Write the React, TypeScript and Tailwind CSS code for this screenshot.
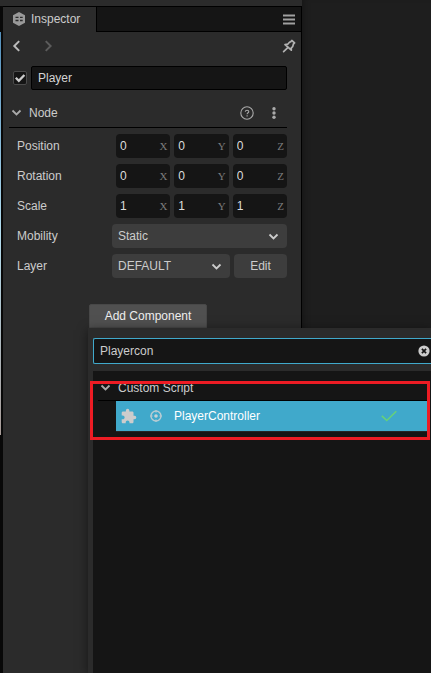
import { useState } from "react";

type Axis = "X" | "Y" | "Z";

const axes: Axis[] = ["X", "Y", "Z"];

const vectors: { label: string; value: string }[] = [
  { label: "Position", value: "0" },
  { label: "Rotation", value: "0" },
  { label: "Scale", value: "1" },
];

function Chevron({ className, d = "M1.5 3.5 5.5 7.5 9.5 3.5" }: { className: string; d?: string }) {
  return (
    <svg viewBox="0 0 11 11" className={className} fill="none" stroke="currentColor" strokeWidth="1.8" aria-hidden="true">
      <path d={d} />
    </svg>
  );
}

function VectorRow({ label, value }: { label: string; value: string }) {
  return (
    <div className="flex h-6 items-center" role="group" aria-label={label}>
      <span className="w-[99px] shrink-0">{label}</span>
      <div className="grid min-w-0 flex-1 grid-cols-3 gap-1">
        {axes.map((axis) => (
          <label key={axis} className="flex h-6 min-w-0 items-center rounded-sm bg-[#151515] pr-[3px] pl-1">
            <input
              type="text"
              defaultValue={value}
              aria-label={`${label} ${axis}`}
              className="w-0 min-w-0 flex-1 bg-transparent text-[#dcdcdc] outline-none"
            />
            <span className="font-['Liberation_Serif',serif] text-[11px] text-[#7c7c7c]">{axis}</span>
          </label>
        ))}
      </div>
    </div>
  );
}

function Select({ id, value, className }: { id: string; value: string; className: string }) {
  return (
    <div className={`grid items-center ${className}`}>
      <select
        id={id}
        className="col-start-1 row-start-1 h-6 w-full appearance-none rounded-sm bg-[#3d3d3d] pl-1.5 text-[#cccccc] outline-none"
      >
        <option>{value}</option>
      </select>
      <Chevron className="pointer-events-none col-start-1 row-start-1 mr-2 size-[11px] justify-self-end text-[#cccccc]" />
    </div>
  );
}

function TabBar() {
  return (
    <div className="flex h-[26px] border-y border-black bg-[#151515]" role="tablist">
      <button
        role="tab"
        aria-selected="true"
        className="-mb-px flex w-[94px] items-center gap-1.5 border-r border-black bg-[#2b2b2b] pb-0.5 pl-2.5"
      >
        <svg viewBox="0 0 12 14" className="h-3.5 w-3 shrink-0" aria-hidden="true">
          <path d="M6 0 12 3.2v7.6L6 14 0 10.8V3.2z" fill="#999999" />
          <path d="M2.5 5.4h3M7 5.4h2.7M2.5 8.5h3M7 8.5h2.7" stroke="#2b2b2b" strokeWidth="1.4" />
        </svg>
        Inspector
      </button>
      <button aria-label="Panel menu" className="mr-1.5 ml-auto">
        <svg viewBox="0 0 12 11" className="h-[11px] w-3" stroke="#a0a0a0" strokeWidth="2.2" aria-hidden="true">
          <path d="M0 1.5h12M0 5.5h12M0 9.5h12" />
        </svg>
      </button>
    </div>
  );
}

function Inspector() {
  return (
    <section className="flex min-w-0 flex-1 flex-col border-r border-black bg-[#2b2b2b]">
      <TabBar />
      <div className="flex h-[34px] items-center pr-[5px] pb-1.5 pl-2">
        <button aria-label="Back" className="text-[#bbbbbb]">
          <Chevron className="size-3" d="M7.500 1 3 5.500 7.500 10" />
        </button>
        <button aria-label="Forward" className="ml-5 text-[#5c5c5c]">
          <Chevron className="size-3" d="M2.500 1 7 5.500 2.500 10" />
        </button>
        <button aria-label="Lock" className="ml-auto">
          <svg viewBox="0 0 14 14" className="size-3.5" fill="none" stroke="#b2b2b2" strokeWidth="1.7" strokeLinejoin="round" strokeLinecap="round" aria-hidden="true">
            <path d="M9.800 1.500 12.600 3.900 11.400 5 10.700 7.600 9.300 8.800 9.300 11.200 3 5.500 5.700 5.200 7.700 3 8.600 2.800zM5.800 8.600 1.600 12.600" />
          </svg>
        </button>
      </div>

      <div className="flex items-center gap-1 pr-3.5 pl-2.5">
        <span className="grid shrink-0 place-items-center">
          <input
            type="checkbox"
            defaultChecked
            aria-label="Node active"
            className="peer col-start-1 row-start-1 size-3.5 appearance-none rounded-xs border border-[#4a4a4a] bg-[#151515]"
          />
          <svg viewBox="0 0 12 12" className="pointer-events-none invisible col-start-1 row-start-1 size-3 peer-checked:visible" fill="none" stroke="#cccccc" strokeWidth="2.300" aria-hidden="true">
            <path d="M1.800 5.800 4.800 8.800 10.400 3" />
          </svg>
        </span>
        <input
          type="text"
          defaultValue="Player"
          aria-label="Node name"
          className="h-6 min-w-0 flex-1 rounded-xs border border-black bg-[#151515] px-1.5 text-[#d4d4d4] outline-none"
        />
      </div>

      <div className="mt-2 mr-3.5 ml-1.5 flex h-[30px] items-center border-b border-black pr-[11px] pl-0.5">
        <button className="flex items-center gap-[7px] font-medium" aria-expanded="true">
          <Chevron className="size-[11px] text-[#aaaaaa]" />
          Node
        </button>
        <button aria-label="Help" className="ml-auto">
          <svg viewBox="0 0 14 14" className="size-3.5" fill="none" stroke="#aaaaaa" aria-hidden="true">
            <circle cx="7" cy="7" r="6.200" strokeWidth="1.100" />
            <path d="M5.300 5.700C5.300 3.700 8.800 3.800 8.800 5.700 8.800 6.800 7.100 6.800 7.100 8.200M7.100 9.300v1.200" strokeWidth="1.100" />
          </svg>
        </button>
        <button aria-label="More options" className="ml-[18px]">
          <svg viewBox="0 0 4 12" className="h-3 w-1" fill="#aaaaaa" aria-hidden="true">
            <circle cx="2" cy="1.700" r="1.700" />
            <circle cx="2" cy="6" r="1.700" />
            <circle cx="2" cy="10.300" r="1.700" />
          </svg>
        </button>
      </div>

      <div className="flex flex-col gap-1.5 pt-1.5 pr-3.5 pl-3.5">
        {vectors.map((row) => (
          <VectorRow key={row.label} {...row} />
        ))}
        <div className="flex h-6 items-center">
          <label htmlFor="mobility" className="w-[95px] shrink-0">Mobility</label>
          <Select id="mobility" value="Static" className="min-w-0 flex-1" />
        </div>
        <div className="flex h-6 items-center">
          <label htmlFor="layer" className="w-[95px] shrink-0">Layer</label>
          <Select id="layer" value="DEFAULT" className="min-w-0 flex-1" />
          <button className="ml-1 h-6 w-[53px] rounded-sm bg-[#3d3d3d]">Edit</button>
        </div>
      </div>

      <div className="mt-[26px] flex justify-center pr-2">
        <button className="h-6 w-[118px] rounded-t-xs border border-[#484848] bg-[#505050] font-medium text-[#eeeeee]">
          Add Component
        </button>
      </div>
    </section>
  );
}

function ComponentMenu() {
  const [query, setQuery] = useState("Playercon");
  return (
    <div className="absolute top-[328px] right-0 bottom-0 left-[88px] flex flex-col bg-[#2b2b2b] pt-2.5 pl-[5px] shadow-[0_2px_10px_rgba(0,0,0,0.5)]">
      <div className="flex h-[26px] items-center rounded-l-xs border border-r-0 border-[#40a9cb] bg-[#151515] pr-px pl-1.5">
        <input
          type="text"
          value={query}
          onChange={(event) => setQuery(event.target.value)}
          aria-label="Search components"
          className="min-w-0 flex-1 bg-transparent text-[#cccccc] outline-none"
        />
        <button aria-label="Clear search" onClick={() => setQuery("")}>
          <svg viewBox="0 0 12 12" className="size-3" aria-hidden="true">
            <circle cx="6" cy="6" r="5.600" fill="#cccccc" />
            <path d="M3.900 3.900 8.100 8.100M8.100 3.900 3.900 8.100" stroke="#151515" strokeWidth="1.700" />
          </svg>
        </button>
      </div>

      <div className="mt-[7px] flex-1 bg-[#151515] pt-1 pr-1 pl-[5px]">
        <button aria-expanded="true" className="flex h-[26px] w-full items-center gap-[7px] border-b border-black pl-0.5 text-[#cccccc]">
          <Chevron className="size-[11px] text-[#aaaaaa]" />
          Custom Script
        </button>
        <button className="ml-[18px] flex h-[31px] w-[calc(100%-18px)] items-center border-b border-[#252525] bg-[#40a9cb] pr-[30px] pl-[5px] font-medium text-white">
          <svg viewBox="1 0 23 23" className="size-4" fill="#cccccc" aria-hidden="true">
            <path d="M20.500 11H19V7c0-1.100-.9-2-2-2h-4V3.500a2.500 2.500 0 0 0-5 0V5H4c-1.100 0-2 .9-2 2v3.800h1.500c1.490 0 2.700 1.210 2.700 2.700s-1.210 2.700-2.700 2.700H2V20c0 1.100.9 2 2 2h3.800v-1.500c0-1.490 1.210-2.700 2.700-2.700s2.700 1.210 2.700 2.700V22H17c1.100 0 2-.9 2-2v-4h1.500a2.500 2.500 0 0 0 0-5z" />
          </svg>
          <svg viewBox="0 0 12 12" className="ml-[13px] size-3" fill="none" stroke="#b9ccd3" aria-hidden="true">
            <circle cx="6" cy="6" r="5" strokeWidth="1.400" />
            <circle cx="6" cy="6" r="1.800" fill="#c8d2d6" stroke="none" />
            <path d="M6 0v2.600M6 9.400V12M0 6h2.600M9.400 6H12" strokeWidth="1" />
          </svg>
          <span className="ml-3">PlayerController</span>
          <svg viewBox="0 0 16 12" className="ml-auto h-3 w-4" fill="none" stroke="#66d17a" strokeWidth="1.600" aria-hidden="true">
            <path d="M.8 5.800 5.800 10.500 15.300 1.200" />
          </svg>
        </button>
      </div>
    </div>
  );
}

export default function App() {
  return (
    <main className="relative flex min-h-screen flex-col overflow-hidden bg-[#1e1e1e] font-['Liberation_Sans',Arial,sans-serif] text-xs text-[#cccccc]">
      <div className="flex flex-1">
        <div className="flex min-w-0 flex-1 flex-col bg-[#2b2b2b]">
          <div className="h-1.5 shrink-0" />
          <div className="flex flex-1">
            <div className="flex w-[3px] flex-col bg-[#080808] pt-[26px] pr-0.5">
              <div className="h-[403px] bg-linear-to-b from-[#538fbb] via-[#b2dcee] to-[#a79b97]" />
            </div>
            <Inspector />
          </div>
        </div>
        <div className="w-[129px] bg-[#1e1e1e] shadow-[inset_6px_0_6px_-4px_rgba(0,0,0,0.25)]" />
      </div>
      <ComponentMenu />
      <div className="pointer-events-none absolute top-[381px] right-px left-[90px] h-[59px] border-3 border-[#ed1c24]" />
    </main>
  );
}
